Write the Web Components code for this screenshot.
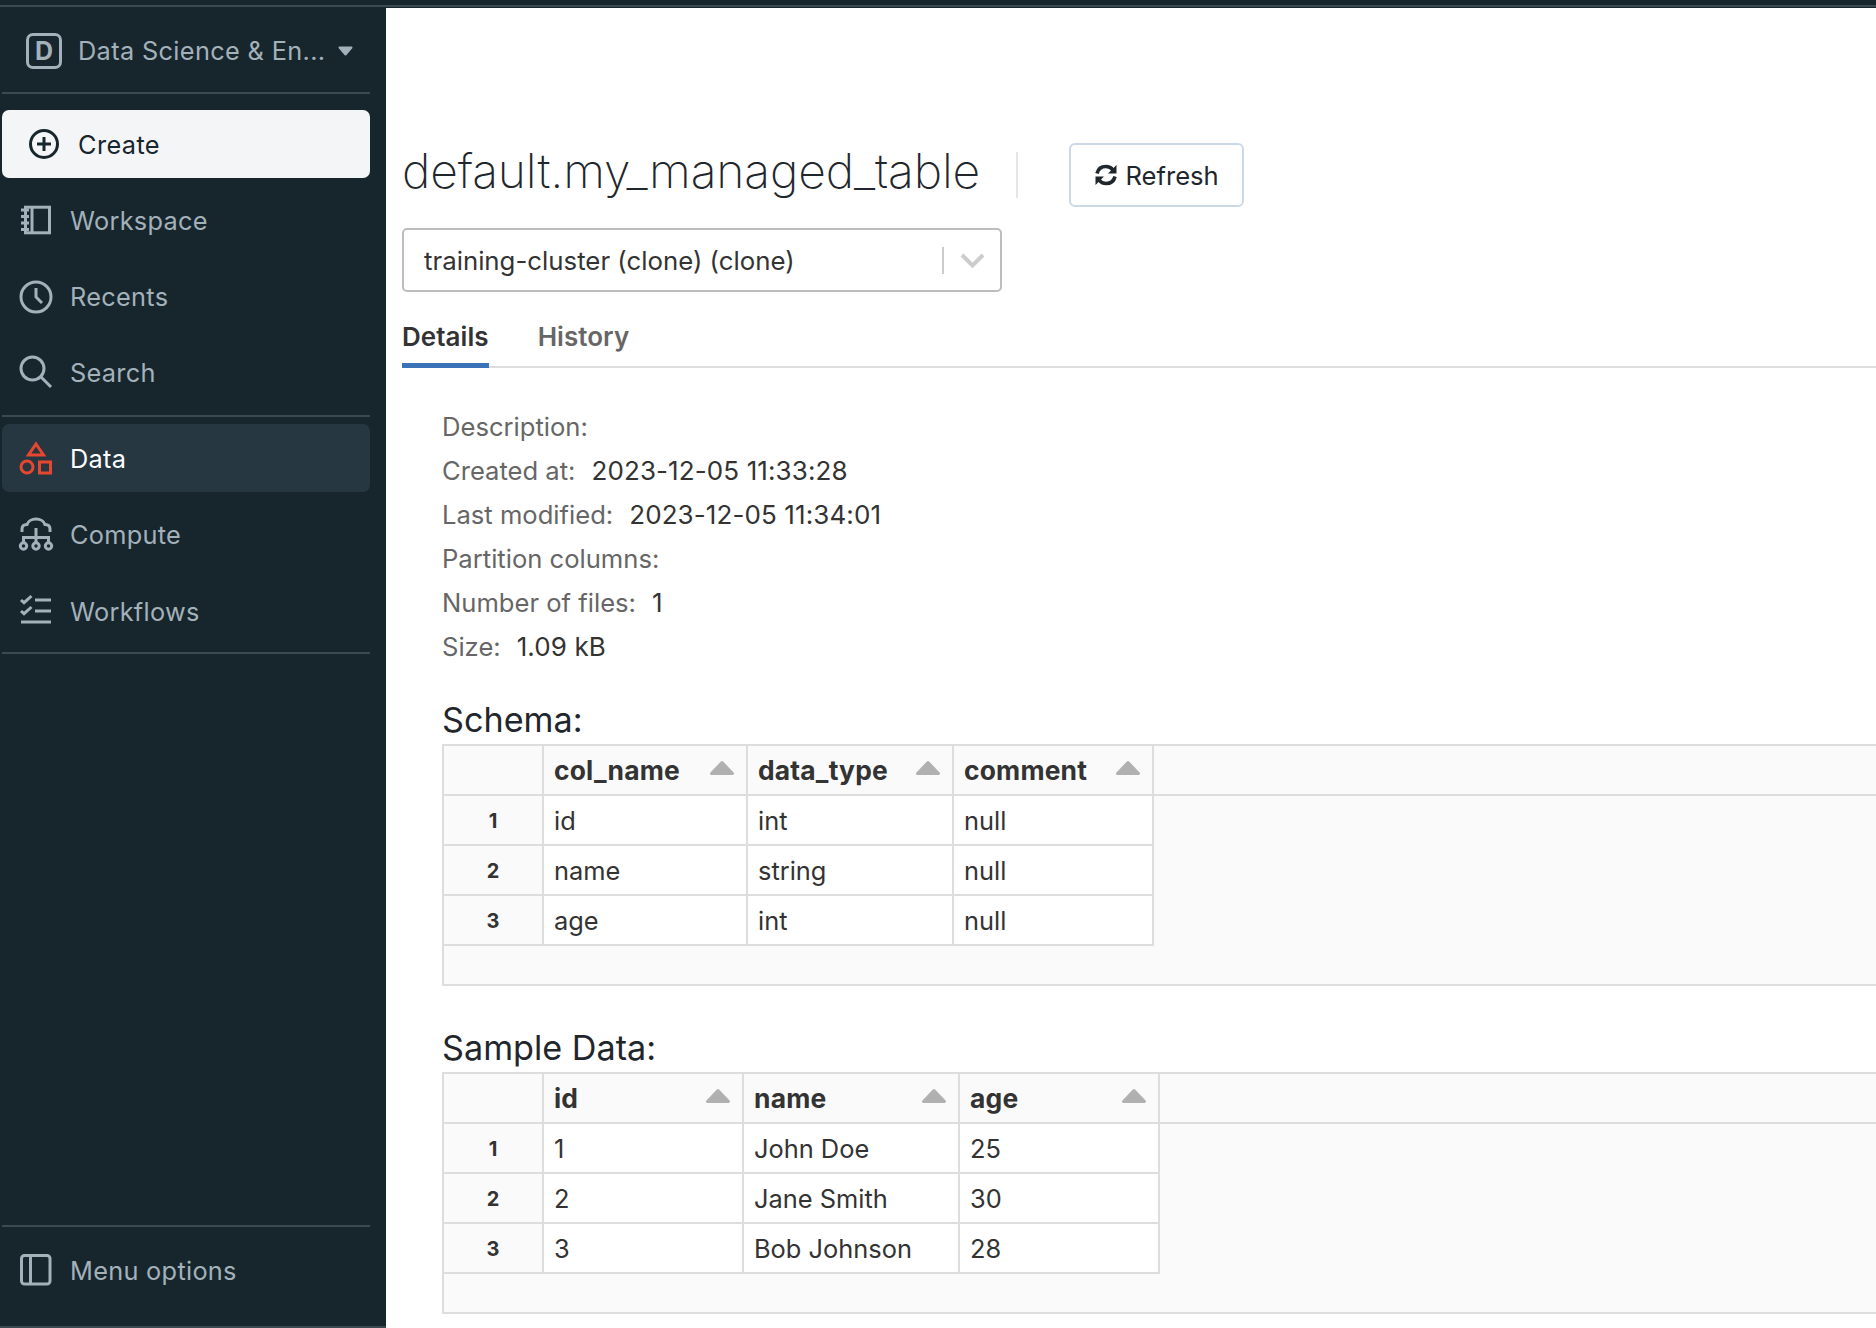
<!DOCTYPE html>
<html>
<head>
<meta charset="utf-8">
<title>default.my_managed_table</title>
<style>
    html, body { margin: 0; height: 100%; overflow: hidden; background: #fff; }
    body { font-family: Inter, "Liberation Sans", sans-serif; }
</style>
</head>
<body>
<app-shell>
    <side-nav slot="nav">
        <work-switcher>Data Science &amp; En...</work-switcher>
        <nav-divider></nav-divider>
        <nav-section first>
            <nav-item kind="create" icon="create">Create</nav-item>
            <nav-item icon="workspace">Workspace</nav-item>
            <nav-item icon="recents">Recents</nav-item>
            <nav-item icon="search">Search</nav-item>
        </nav-section>
        <nav-divider></nav-divider>
        <nav-section second>
            <nav-item kind="active" icon="data">Data</nav-item>
            <nav-item icon="compute">Compute</nav-item>
            <nav-item icon="workflows">Workflows</nav-item>
        </nav-section>
        <nav-divider></nav-divider>
        <nav-item slot="bottom" icon="menu">Menu options</nav-item>
    </side-nav>

    <table-title>default.my_managed_table</table-title>
    <cluster-select>training-cluster (clone) (clone)</cluster-select>
    <tab-bar></tab-bar>
    <info-list>
        <info-line label="Description:"></info-line>
        <info-line label="Created at:">2023-12-05 11:33:28</info-line>
        <info-line label="Last modified:">2023-12-05 11:34:01</info-line>
        <info-line label="Partition columns:"></info-line>
        <info-line label="Number of files:">1</info-line>
        <info-line label="Size:">1.09 kB</info-line>
    </info-list>
    <data-grid heading="Schema:" widths="100,204,206,200" columns="col_name,data_type,comment" rows="id,int,null;name,string,null;age,int,null"></data-grid>
    <data-grid style="margin-top:34px" heading="Sample Data:" widths="100,200,216,200" columns="id,name,age" rows="1,John Doe,25;2,Jane Smith,30;3,Bob Johnson,28"></data-grid>
</app-shell>

<script>
    const ICONS = {
        create: '<circle cx="18" cy="18" r="13.5"/><path d="M18 11v14M11 18h14"/>',
        workspace: '<rect x="7.500" y="4.200" width="24" height="25.600"/><path d="M14 4.200v25.600M3 7h8M3 13.500h8M3 20h8M3 26.500h8"/>',
        recents: '<circle cx="18" cy="18" r="15"/><path d="M18 9v9l6 6"/>',
        search: '<circle cx="14.500" cy="13.500" r="11.500"/><path d="M23 22l10 10"/>',
        data: '<path d="M18 4l7.500 11h-15z"/><circle cx="9" cy="27" r="6"/><rect x="21.500" y="22" width="11" height="11"/>',
        compute: '<path d="M4 15v-3c0-3 2-4.500 5-4.500C10 4 14 2 18 2s8 2 9 5.500c3 0 5 1.500 5 4.500v3"/><path d="M18 11v15M5.500 26v-5.500h25V26"/><circle cx="5.500" cy="29" r="3.200"/><circle cx="18" cy="29" r="3.200"/><circle cx="30.500" cy="29" r="3.200"/>',
        workflows: '<path d="M17 6h16M17 17h16M3 28h30M3 6l3 2.700L13.500 2M3 17l3 2.700 7.500-6.700"/>',
        menu: '<rect x="3.500" y="2.500" width="28.500" height="28.500" rx="3"/><path d="M12.500 2.500v28.500"/>'
    };

    class AppShell extends HTMLElement {
        connectedCallback() {
            this.attachShadow({ mode: 'open' });
            this.shadowRoot.innerHTML = `
                <style>
                    :host { display: flex; flex-direction: column; height: 1328px; overflow: hidden; }
                    .strip { flex: none; height: 5px; background: #17262d; border-bottom: 2px solid #3b4a52; }
                    .body { flex: 1; min-height: 0; display: grid; grid-template-columns: 386px 1fr; padding-top: 1px; background: #17262d; }
                    main { background: #fff; padding: 135px 0 0 16px; overflow: hidden; min-width: 0; }
                </style>
                <div class="strip"></div>
                <div class="body">
                    <slot name="nav"></slot>
                    <main><slot></slot></main>
                </div>
            `;
        }
    }

    class SideNav extends HTMLElement {
        connectedCallback() {
            this.attachShadow({ mode: 'open' });
            this.shadowRoot.innerHTML = `
                <style>
                    :host { display: flex; flex-direction: column; background: #17262d; border-bottom: 2px solid #3b4a52; box-sizing: border-box; }
                    .top { flex: 1; }
                    .bottom { padding: 10px 0 21px; border-top: 2px solid #3b4a52; margin: 0 16px 0 2px; }
                </style>
                <div class="top"><slot></slot></div>
                <div class="bottom"><slot name="bottom"></slot></div>
            `;
        }
    }

    class WorkSwitcher extends HTMLElement {
        connectedCallback() {
            this.attachShadow({ mode: 'open' });
            this.shadowRoot.innerHTML = `
                <style>
                    :host { display: flex; align-items: center; height: 84px; padding: 1px 0 0 26px; box-sizing: border-box; color: #a3b1ba; font-size: 25.3px; letter-spacing: 0.35px; }
                    .box { width: 36px; height: 36px; box-sizing: border-box; border: 3px solid #a3b1ba; border-radius: 7px; display: flex; align-items: center; justify-content: center; font-size: 25px; font-weight: 700; letter-spacing: 0; margin-right: 16px; }
                    svg { margin-left: 13px; }
                </style>
                <span class="box">D</span>
                <slot></slot>
                <svg width="15" height="10" viewBox="0 0 15 10"><path d="M1.500 1.500h12L7.500 8.500z" fill="#a3b1ba" stroke="#a3b1ba" stroke-width="2" stroke-linejoin="round"/></svg>
            `;
        }
    }

    class NavDivider extends HTMLElement {
        connectedCallback() {
            this.attachShadow({ mode: 'open' });
            this.shadowRoot.innerHTML = `
                <style>:host { display: block; height: 2px; background: #3b4a52; margin: 0 16px 0 2px; }</style>
            `;
        }
    }

    class NavSection extends HTMLElement {
        connectedCallback() {
            this.attachShadow({ mode: 'open' });
            this.shadowRoot.innerHTML = `
                <style>
                    :host { display: flex; flex-direction: column; gap: 8px; padding: 7px 16px 8px 2px; }
                    :host([first]) { padding-top: 16px; }
                    :host([second]) { gap: 9px; padding-bottom: 6px; }
                </style>
                <slot></slot>
            `;
        }
    }

    class NavItem extends HTMLElement {
        connectedCallback() {
            this.attachShadow({ mode: 'open' });
            const icon = ICONS[this.getAttribute('icon')] || '';
            this.shadowRoot.innerHTML = `
                <style>
                    :host { display: flex; align-items: center; height: 68px; padding-left: 16px; border-radius: 7px; color: #a3b1ba; font-size: 25.3px; letter-spacing: 0.3px; }
                    svg { flex: none; margin-right: 16px; fill: none; stroke: currentColor; stroke-width: 3; }
                    span { padding-bottom: 2px; }
                    :host([kind="create"]) { background: #f4f5f7; color: #17262d; padding-left: 24px; margin-bottom: 1px; }
                    :host([kind="create"]) svg { margin-right: 16px; }
                    :host([kind="create"]) span { padding-bottom: 0; letter-spacing: 0.4px; }
                    :host([kind="active"]) span { padding-bottom: 0; }
                    :host([kind="active"]) { background: #263742; color: #fff; }
                    :host([kind="active"]) svg { stroke: #e8472f; }
                </style>
                <svg width="36" height="36" viewBox="0 0 36 36">${icon}</svg>
                <span><slot></slot></span>
            `;
        }
    }

    class TableTitle extends HTMLElement {
        connectedCallback() {
            this.attachShadow({ mode: 'open' });
            this.shadowRoot.innerHTML = `
                <style>
                    :host { display: flex; align-items: center; height: 64px; color: #1f272d; }
                    h1 { margin: -10px 0 0; font-size: 48px; font-weight: 200; letter-spacing: -0.15px; white-space: nowrap; }
                    .sep { width: 2px; height: 46px; background: #e4e7ea; margin: 0 51px 0 36px; }
                    button { display: flex; align-items: center; gap: 7px; width: 175px; height: 64px; justify-content: center; box-sizing: border-box; padding-top: 1px; background: #fff; border: 2px solid #cbd9e6; border-radius: 6px; color: #1f272d; font: inherit; font-size: 25.6px; }
                </style>
                <h1><slot></slot></h1>
                <span class="sep"></span>
                <button>
                    <svg width="24" height="24" viewBox="0 0 24 24" fill="none" stroke="#1f272d" stroke-width="3.600">
                        <path d="M3 10.500C4 6 7.500 3.500 12 3.500c3 0 5.500 1.500 7 3.500"/>
                        <path d="M21 13.500C20 18 16.500 20.500 12 20.500c-3 0-5.500-1.500-7-3.500"/>
                        <path d="M22.500 2v8.500H14z" fill="#1f272d" stroke="none"/>
                        <path d="M1.500 22v-8.500H10z" fill="#1f272d" stroke="none"/>
                    </svg>
                    Refresh
                </button>
            `;
        }
    }

    class ClusterSelect extends HTMLElement {
        connectedCallback() {
            this.attachShadow({ mode: 'open' });
            this.shadowRoot.innerHTML = `
                <style>
                    :host { display: flex; align-items: center; width: 600px; height: 64px; margin-top: 21px; box-sizing: border-box; padding-left: 20px; border: 2px solid #bdbdbd; border-radius: 5px; color: #333; font-size: 25.8px; }
                    .value { flex: 1; }
                    .bar { width: 2px; height: 27px; background: #ccc; margin-right: 16px; }
                    svg { margin-right: 15px; }
                </style>
                <span class="value"><slot></slot></span>
                <span class="bar"></span>
                <svg width="25" height="15" viewBox="0 0 25 15"><path d="M2 2l10.500 10.500L23 2" fill="none" stroke="#ccc" stroke-width="4"/></svg>
            `;
        }
    }

    class TabBar extends HTMLElement {
        connectedCallback() {
            this.attachShadow({ mode: 'open' });
            this.shadowRoot.innerHTML = `
                <style>
                    :host { display: flex; height: 76px; box-sizing: border-box; gap: 49px; border-bottom: 2px solid #ddd; font-size: 26px; font-weight: 600; color: #666; }
                    span { display: flex; align-items: center; height: 76px; box-sizing: border-box; padding-top: 17px; border-bottom: 5px solid transparent; letter-spacing: 0.05px; }
                    .on { color: #333; border-bottom-color: #3b73b9; }
                </style>
                <span class="on">Details</span>
                <span>History</span>
            `;
        }
    }

    class InfoList extends HTMLElement {
        connectedCallback() {
            this.attachShadow({ mode: 'open' });
            this.shadowRoot.innerHTML = `
                <style>:host { display: block; padding: 36px 0 24px 40px; }</style>
                <slot></slot>
            `;
        }
    }

    class InfoLine extends HTMLElement {
        connectedCallback() {
            this.attachShadow({ mode: 'open' });
            this.shadowRoot.innerHTML = `
                <style>
                    :host { display: flex; height: 44px; align-items: center; gap: 16px; font-size: 26px; color: #333; letter-spacing: 0.1px; }
                    .label { color: #666; font-size: 25.6px; letter-spacing: 0; }
                </style>
                <span class="label">${this.getAttribute('label')}</span>
                <span><slot></slot></span>
            `;
        }
    }

    class DataGrid extends HTMLElement {
        connectedCallback() {
            this.attachShadow({ mode: 'open' });
            const widths = this.getAttribute('widths').split(',');
            const columns = this.getAttribute('columns').split(',');
            const rows = this.getAttribute('rows').split(';').map(r => r.split(','));
            const arrow = `<svg width="26" height="16" viewBox="0 0 26 16"><path d="M13 2.500L23.500 13.500H2.500z" fill="#b0b0b0" stroke="#b0b0b0" stroke-width="3" stroke-linejoin="round"/></svg>`;
            const head = columns.map((c, i) => `<div class="cell hd" style="width:${widths[i + 1]}px"><span>${c}</span>${arrow}</div>`).join('');
            const body = rows.map((r, n) => `
                <div class="row">
                    <div class="cell idx" style="width:${widths[0]}px">${n + 1}</div>
                    ${r.map((v, i) => `<div class="cell" style="width:${widths[i + 1]}px">${v}</div>`).join('')}
                </div>`).join('');
            this.shadowRoot.innerHTML = `
                <style>
                    :host { display: block; padding-left: 40px; font-size: 25.4px; color: #333; }
                    h2 { margin: 0; height: 52px; line-height: 55px; font-size: 34.2px; font-weight: 400; color: #1f272d; }
                    .grid { border: 2px solid #ddd; border-right: 0; background: #fafafa; }
                    .row { display: flex; height: 50px; box-sizing: border-box; width: max-content; border-bottom: 2px solid #ddd; }
                    .head { width: auto; height: 50px; display: flex; border-bottom: 2px solid #ddd; box-sizing: border-box; }
                    .cell { flex: none; box-sizing: border-box; display: flex; align-items: center; padding-left: 10px; background: #fff; border-right: 2px solid #ddd; }
                    .hd { background: #fafafa; font-weight: 700; font-size: 26.4px; justify-content: space-between; padding-right: 11px; }
                    .hd span { letter-spacing: 0.2px; }
                    .hd svg { margin-top: -4px; }
                    .idx { background: #fafafa; font-weight: 700; font-size: 20px; justify-content: center; padding: 1px 0 0; }
                    .foot { height: 38px; }
                </style>
                <h2>${this.getAttribute('heading')}</h2>
                <div class="grid">
                    <div class="head">
                        <div class="cell hd" style="width:${widths[0]}px"></div>
                        ${head}
                    </div>
                    ${body}
                    <div class="foot"></div>
                </div>
            `;
        }
    }

    customElements.define('app-shell', AppShell);
    customElements.define('side-nav', SideNav);
    customElements.define('work-switcher', WorkSwitcher);
    customElements.define('nav-divider', NavDivider);
    customElements.define('nav-section', NavSection);
    customElements.define('nav-item', NavItem);
    customElements.define('table-title', TableTitle);
    customElements.define('cluster-select', ClusterSelect);
    customElements.define('tab-bar', TabBar);
    customElements.define('info-list', InfoList);
    customElements.define('info-line', InfoLine);
    customElements.define('data-grid', DataGrid);
</script>
</body>
</html>
